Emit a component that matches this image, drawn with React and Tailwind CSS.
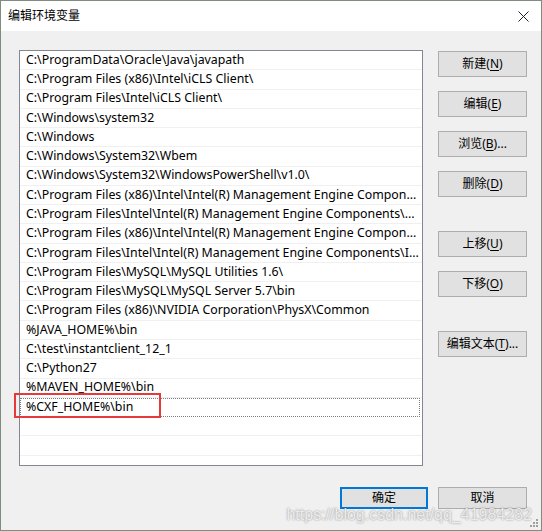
import React from 'react';

const PATHS = [
  'C:\\ProgramData\\Oracle\\Java\\javapath',
  'C:\\Program Files (x86)\\Intel\\iCLS Client\\',
  'C:\\Program Files\\Intel\\iCLS Client\\',
  'C:\\Windows\\system32',
  'C:\\Windows',
  'C:\\Windows\\System32\\Wbem',
  'C:\\Windows\\System32\\WindowsPowerShell\\v1.0\\',
  'C:\\Program Files (x86)\\Intel\\Intel(R) Management Engine Compon...',
  'C:\\Program Files\\Intel\\Intel(R) Management Engine Components\\...',
  'C:\\Program Files (x86)\\Intel\\Intel(R) Management Engine Compon...',
  'C:\\Program Files\\Intel\\Intel(R) Management Engine Components\\I...',
  'C:\\Program Files\\MySQL\\MySQL Utilities 1.6\\',
  'C:\\Program Files\\MySQL\\MySQL Server 5.7\\bin',
  'C:\\Program Files (x86)\\NVIDIA Corporation\\PhysX\\Common',
  '%JAVA_HOME%\\bin',
  'C:\\test\\instantclient_12_1',
  'C:\\Python27',
  '%MAVEN_HOME%\\bin',
];

const FONT = "font-['Noto_Sans','Noto_Sans_CJK_SC',sans-serif]";

// label, hotkey, suffix, top margin
const SIDE_BUTTONS = [
  { label: '新建', key: 'N', tail: ')', mt: 'mt-0' },
  { label: '编辑', key: 'E', tail: ')', mt: 'mt-[14px]' },
  { label: '浏览', key: 'B', tail: ')...', mt: 'mt-[14px]' },
  { label: '删除', key: 'D', tail: ')', mt: 'mt-[14px]' },
  { label: '上移', key: 'U', tail: ')', mt: 'mt-[34px]' },
  { label: '下移', key: 'O', tail: ')', mt: 'mt-[14px]' },
  { label: '编辑文本', key: 'T', tail: ')...', mt: 'mt-[34px]' },
];

function SideButton({ label, hotkey, tail, className }) {
  return (
    <button
      className={`w-[89px] h-[26px] flex items-center justify-center bg-[#e1e1e1] border border-[#adadad] text-[12px] text-black ${className}`}
    >
      {label}(<span className="underline underline-offset-2">{hotkey}</span>{tail}
    </button>
  );
}

function Grip() {
  return (
    <svg width="9" height="9" viewBox="0 0 9 9" className="absolute right-[3px] bottom-[3px]">
      {[[7, 1], [4, 4], [7, 4], [1, 7], [4, 7], [7, 7]].map(([x, y]) => (
        <rect key={`${x}-${y}`} x={x} y={y} width="2" height="2" fill="#a0a0a0" />
      ))}
    </svg>
  );
}

export default function App() {
  return (
    <div className={`relative w-[542px] h-[531px] flex flex-col bg-[#f0f0f0] border border-[#7f8c7f] ${FONT}`}>
      {/* 标题栏 */}
      <div className="h-[30px] flex items-center justify-between bg-white pl-[7px] pr-[12px] shrink-0">
        <span className="text-[12px] text-black">编辑环境变量</span>
        <svg width="11" height="11" viewBox="0 0 11 11">
          <path d="M0.5 0.5 L10.5 10.5 M10.5 0.5 L0.5 10.5" stroke="#222" strokeWidth="1" />
        </svg>
      </div>

      {/* 主体 */}
      <div className="flex-1 flex flex-col pl-[18px] pr-[14px] pt-[19px]">
        <div className="flex gap-[15px]">
          {/* 列表 */}
          <div className="relative w-[404px] h-[416px] bg-white border border-[#828790]">
            <div className="h-full overflow-hidden">
              {PATHS.map((p) => (
                <div
                  key={p}
                  className="h-[19.28px] flex items-center pl-[6px] border-b border-[#f0f0f0] text-[12.35px] text-black whitespace-nowrap overflow-hidden"
                >
                  {p}
                </div>
              ))}
              <div className="h-[19.28px] flex items-center pl-[5px] text-[12.35px] text-black whitespace-nowrap border border-dotted border-[#808080] mr-[2px]">
                %CXF_HOME%\bin
              </div>
              {[0, 1, 2].map((i) => (
                <div key={i} className="h-[19.28px] border-b border-[#f0f0f0]" />
              ))}
            </div>
            {/* 红框标注 */}
            <div className="absolute left-[-6px] top-[342px] w-[147px] h-[25px] border-2 border-[#e8393a] pointer-events-none" />
          </div>

          {/* 右侧按钮 */}
          <div className="flex flex-col pt-[1px]">
            {SIDE_BUTTONS.map((b) => (
              <SideButton key={b.key} label={b.label} hotkey={b.key} tail={b.tail} className={b.mt} />
            ))}
          </div>
        </div>

        {/* 底部按钮 */}
        <div className="flex justify-end gap-[10px] mt-[21px]">
          <button className="w-[88px] h-[22px] flex items-center justify-center bg-[#e1e1e1] border-2 border-[#0078d7] text-[12px] text-black">
            确定
          </button>
          <button className="w-[89px] h-[22px] flex items-center justify-center bg-[#e1e1e1] border border-[#adadad] text-[12px] text-black">
            取消
          </button>
        </div>
      </div>

      {/* 水印 */}
      <span className="absolute right-[9px] bottom-[7px] leading-none font-['Liberation_Sans',sans-serif] text-[16px] text-[#f4f4f4]/90 [text-shadow:0_0_2px_rgba(0,0,0,0.45)] pointer-events-none">
        https://blog.csdn.net/qq_41984282
      </span>
      <Grip />
    </div>
  );
}
